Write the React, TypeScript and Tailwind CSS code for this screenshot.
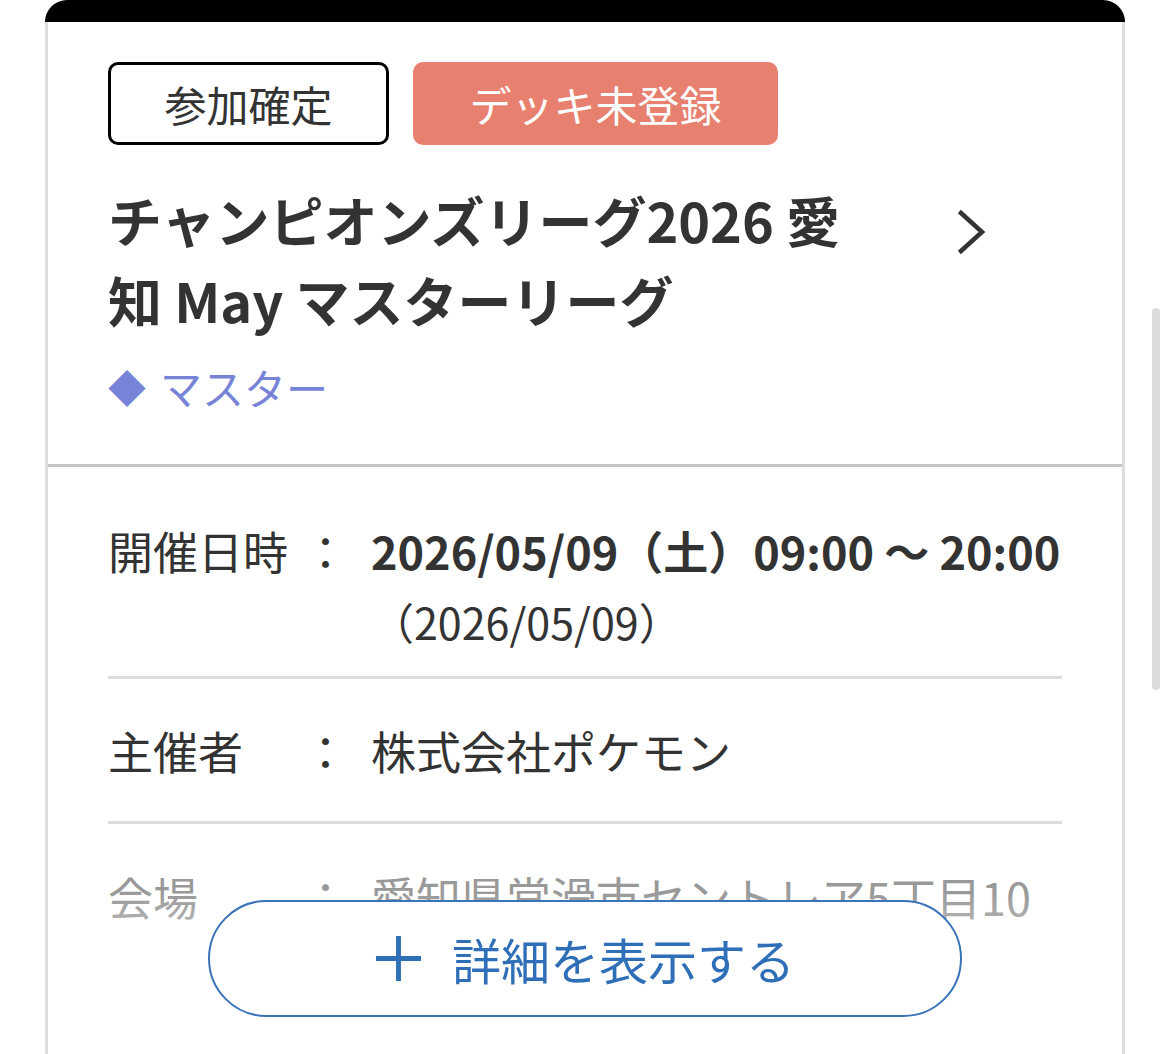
const font = { fontFamily: '"Noto Sans CJK JP", "Noto Sans", sans-serif' }

function Row({
  label,
  value,
  sub,
  bold,
  className,
}: {
  label: string
  value: string
  sub?: string
  bold?: boolean
  className?: string
}) {
  return (
    <div className={`flex text-[45px] leading-[60px] ${className ?? ''}`}>
      <div className="w-[195px] shrink-0">{label}</div>
      <div className="w-[68px] shrink-0">：</div>
      <div className="flex-1 whitespace-nowrap">
        <div className={bold ? 'font-bold' : ''}>{value}</div>
        {sub && <div className="mt-[10px] text-[43px] font-normal">{sub}</div>}
      </div>
    </div>
  )
}

function App() {
  return (
    <div className="relative h-[1054px] overflow-hidden bg-white text-[#333333]" style={font}>
      <div className="mx-[45px] rounded-t-[22px] bg-black pt-[22px]">
        <div className="relative h-[1100px] border-x-[3px] border-[#dddddd] bg-white">
          {/* header */}
          <div className="px-[60px] pt-[40px] pb-[47px]">
            <div className="flex gap-[24px]">
              <div className="flex h-[83px] w-[281px] items-center justify-center rounded-[10px] border-[3px] border-black text-[42px]">
                参加確定
              </div>
              <div className="flex h-[83px] w-[365px] items-center justify-center rounded-[10px] bg-[#e8806f] text-[42px] text-white">
                デッキ未登録
              </div>
            </div>
            <div className="mt-[35px] flex">
              <h1 className="w-[760px] text-[54px] font-bold leading-[80px]">
                チャンピオンズリーグ2026 愛知 May マスターリーグ
              </h1>
              <svg viewBox="0 0 30 48" className="ml-[88px] mt-[28px] h-[48px] w-[30px]" fill="none" stroke="#333333" strokeWidth="4.5" strokeLinecap="square">
                <path d="M5 5 L26 24 L5 43" />
              </svg>
            </div>
            <div className="mt-[17px] flex items-center text-[42px] leading-[60px] text-[#7783d6]">
              <span className="mr-[14px] text-[38px]">◆</span>
              <span>マスター</span>
            </div>
          </div>
          <div className="h-[3px] bg-[#c4c4c4]" />

          {/* details */}
          <div className="px-[60px]">
            <Row
              className="pt-[54px] pb-[25px]"
              label="開催日時"
              value="2026/05/09（土）09:00 〜 20:00"
              sub="（2026/05/09）"
              bold
            />
            <div className="h-[3px] bg-[#dcdcdc]" />
            <Row className="pt-[42px] pb-[40px]" label="主催者" value="株式会社ポケモン" />
            <div className="h-[3px] bg-[#dcdcdc]" />
            <Row className="pt-[43px] pb-[40px] text-[#999999]" label="会場" value="愛知県常滑市セントレア5丁目10" />
          </div>

          {/* fade + button */}
          <div className="absolute inset-x-0 top-[870px] h-[230px] bg-gradient-to-b from-white/0 via-white/90 to-white" />
          <button className="absolute left-[160px] top-[878px] flex h-[117px] w-[754px] items-center justify-center rounded-full border-2 border-[#3b73b9] bg-white text-[49px] text-[#2f6fb8]">
            <svg viewBox="0 0 48 48" className="mr-[30px] h-[47px] w-[47px]" fill="none" stroke="currentColor" strokeWidth="5">
              <path d="M24 1v46M1 24h46" />
            </svg>
            詳細を表示する
          </button>
        </div>
      </div>

      {/* overlay scrollbar */}
      <div className="absolute right-[10px] top-[308px] h-[382px] w-[8px] rounded-full bg-[#dcdcdc]" />
    </div>
  )
}

export default App
